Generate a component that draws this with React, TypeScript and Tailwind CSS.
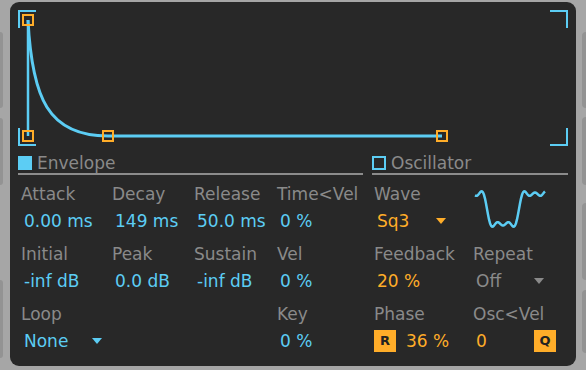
import React from "react";

const BLUE = "#5ccdf4";
const ORANGE = "#ffad29";

const wavePoints = () => {
  const pts: string[] = [];
  for (let x = 0; x <= 70; x += 1) {
    const t = Math.PI + (x - 12) * ((2 * Math.PI) / 64);
    const f = Math.sin(t) + Math.sin(3 * t) / 3 + Math.sin(5 * t) / 5;
    pts.push(`${x + 2},${(21 - f * 19).toFixed(2)}`);
  }
  return pts.join(" ");
};

const Arrow = ({ color }: { color: string }) => (
  <svg width="10" height="6" viewBox="0 0 10 6">
    <path d="M0 0 H10 L5 6 Z" fill={color} />
  </svg>
);

const Label = ({ children }: { children: React.ReactNode }) => (
  <div className="h-[20px] pl-[3px] leading-[20px] text-[#8a8a8a]">{children}</div>
);

const Value = ({ children, color = "text-[#5ccdf4]" }: { children: React.ReactNode; color?: string }) => (
  <div className={`mt-[7px] h-[20px] pl-[6px] leading-[20px] ${color}`}>{children}</div>
);

const Cell = ({ label, value }: { label?: string; value?: string }) => (
  <div className="h-[60px]">
    <Label>{label}</Label>
    {value && <Value>{value}</Value>}
  </div>
);

const Graph = () => (
  <svg width="550" height="140" viewBox="0 0 550 140">
    <g fill={BLUE}>
      <rect x="0" y="2" width="18" height="2" />
      <rect x="0" y="2" width="2" height="18" />
      <rect x="0" y="120" width="2" height="18" />
      <rect x="0" y="136" width="18" height="2" />
      <rect x="532" y="2" width="18" height="2" />
      <rect x="548" y="2" width="2" height="18" />
      <rect x="548" y="120" width="2" height="18" />
      <rect x="532" y="136" width="18" height="2" />
    </g>
    <line x1="10" y1="12" x2="10" y2="128" stroke={BLUE} strokeWidth="2.5" />
    <path
      d="M10 12 C 14 90, 30 128, 90 128 L 424 128"
      fill="none"
      stroke={BLUE}
      strokeWidth="3"
    />
    <g fill="none" stroke={ORANGE} strokeWidth="2">
      <rect x="5" y="7" width="10" height="10" />
      <rect x="5" y="123" width="10" height="10" />
      <rect x="85" y="123" width="10" height="10" />
      <rect x="419" y="123" width="10" height="10" />
    </g>
  </svg>
);

const Header = ({ title, filled }: { title: string; filled: boolean }) => (
  <div>
    <div className="flex h-[20px] items-center gap-[5px]">
      <div
        className={
          filled
            ? "h-[14px] w-[14px] bg-[#5ccdf4]"
            : "h-[14px] w-[14px] border-2 border-[#5ccdf4]"
        }
      />
      <span className="leading-[20px] text-[#8a8a8a]">{title}</span>
    </div>
    <div className="h-[2px] bg-[#8c8c8c]" />
  </div>
);

const SideBlock = ({ h, mt, side }: { h: number; mt: number; side: "l" | "r" }) => (
  <div
    className={side === "l" ? "w-[3px] rounded-r-[3px] bg-[#939393]" : "w-[4px] rounded-l-[4px] bg-[#939393]"}
    style={{ height: h, marginTop: mt }}
  />
);

export default function App() {
  return (
    <div
      className="flex h-[370px] w-[586px] overflow-hidden bg-[#a6a6a6] text-[17px]"
      style={{ fontFamily: '"DejaVu Sans", sans-serif' }}
    >
      <div className="flex w-[10px] flex-col">
        <SideBlock side="l" mt={32} h={76} />
        <SideBlock side="l" mt={10} h={67} />
        <SideBlock side="l" mt={95} h={78} />
      </div>

      <div className="mt-[2px] flex h-[364px] w-[566px] flex-col rounded-[9px] bg-[#282828] px-[8px] pt-[6px]">
        <Graph />

        <div className="mt-[5px] flex gap-[9px]">
          <div className="w-[345px]">
            <Header title="Envelope" filled />
            <div className="mt-[9px] grid grid-cols-[91px_82px_83px_89px]">
              <Cell label="Attack" value="0.00 ms" />
              <Cell label="Decay" value="149 ms" />
              <Cell label="Release" value="50.0 ms" />
              <Cell label="Time<Vel" value="0 %" />
              <Cell label="Initial" value="-inf dB" />
              <Cell label="Peak" value="0.0 dB" />
              <Cell label="Sustain" value="-inf dB" />
              <Cell label="Vel" value="0 %" />
              <div className="h-[60px]">
                <Label>Loop</Label>
                <div className="mt-[7px] flex h-[20px] w-[84px] items-center justify-between pl-[6px] leading-[20px] text-[#5ccdf4]">
                  <span>None</span>
                  <Arrow color={BLUE} />
                </div>
              </div>
              <div />
              <div />
              <Cell label="Key" value="0 %" />
            </div>
          </div>

          <div className="w-[196px]">
            <Header title="Oscillator" filled={false} />
            <div className="mt-[9px] grid grid-cols-[98px_98px]">
              <div className="-ml-[1px] h-[60px]">
                <Label>Wave</Label>
                <div className="mt-[7px] flex h-[20px] w-[75px] items-center justify-between pl-[6px] leading-[20px] text-[#ffad29]">
                  <span>Sq3</span>
                  <Arrow color={ORANGE} />
                </div>
              </div>
              <div className="h-[60px]">
                <svg width="76" height="44" viewBox="0 0 76 44" className="ml-[3px] mt-[4px]">
                  <polyline points={wavePoints()} fill="none" stroke={BLUE} strokeWidth="2.5" strokeLinejoin="round" />
                </svg>
              </div>

              <div className="-ml-[1px] h-[60px]">
                <Label>Feedback</Label>
                <Value color="text-[#ffad29]">20 %</Value>
              </div>
              <div className="h-[60px]">
                <Label>Repeat</Label>
                <div className="mt-[7px] flex h-[20px] w-[74px] items-center justify-between pl-[6px] leading-[20px] text-[#8a8a8a]">
                  <span>Off</span>
                  <Arrow color="#8a8a8a" />
                </div>
              </div>

              <div className="-ml-[1px] h-[60px]">
                <Label>Phase</Label>
                <div className="mt-[6px] flex h-[22px] items-center gap-[10px] pl-[3px] text-[#ffad29]">
                  <div className="flex h-[22px] w-[22px] items-center justify-center bg-[#ffad29] text-[13px] font-bold text-[#222222]">
                    R
                  </div>
                  <span className="leading-[20px]">36 %</span>
                </div>
              </div>
              <div className="h-[60px]">
                <Label>Osc&lt;Vel</Label>
                <div className="mt-[6px] flex h-[22px] w-[86px] items-center justify-between pl-[6px] text-[#ffad29]">
                  <span className="leading-[20px]">0</span>
                  <div className="flex h-[22px] w-[22px] items-center justify-center bg-[#ffad29] text-[13px] font-bold text-[#222222]">
                    Q
                  </div>
                </div>
              </div>
            </div>
          </div>
        </div>
      </div>

      <div className="ml-[6px] flex w-[4px] flex-col">
        <SideBlock side="r" mt={32} h={76} />
        <SideBlock side="r" mt={9} h={68} />
        <SideBlock side="r" mt={18} h={77} />
        <SideBlock side="r" mt={10} h={63} />
      </div>
    </div>
  );
}
